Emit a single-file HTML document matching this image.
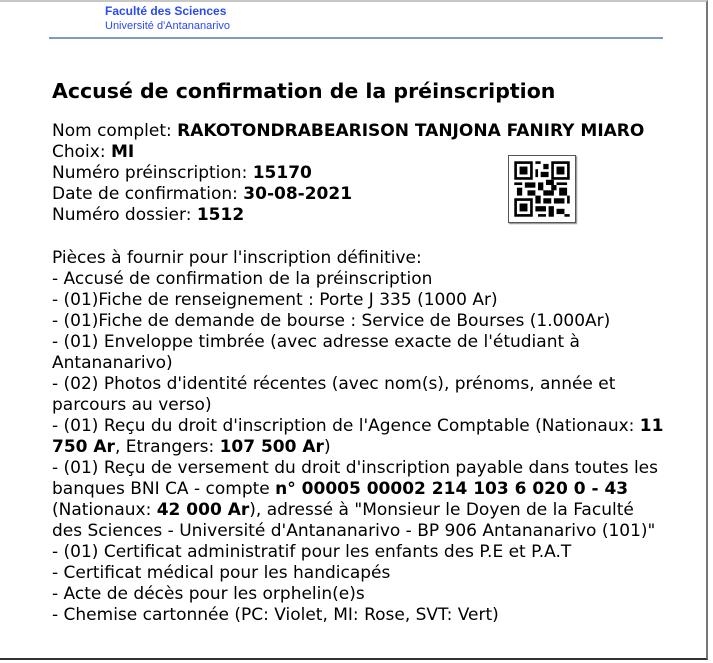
<!DOCTYPE html>
<html><head><meta charset="utf-8"><style>
body{margin:0;width:713px;height:663px;background:#fff;position:relative;overflow:hidden}
.frame{position:absolute;left:0;top:0;width:708px;height:660px;border-top:2px solid #c8c8c8;border-right:2px solid #777;border-bottom:2px solid #333;box-sizing:border-box}
.h1{position:absolute;left:105px;top:4px;font:bold 12px "Liberation Sans",sans-serif;color:#2a4bf0}
.h2{position:absolute;left:105px;top:20px;font:11px "Liberation Sans",sans-serif;color:#2a4bf0}
.rule{position:absolute;left:49px;top:37px;height:2px;background:#7d9ac0;width:614px}
.title{position:absolute;left:52px;top:79px;font:bold 20.5px "DejaVu Sans",sans-serif;color:#000;white-space:nowrap}
.txt{position:absolute;left:52px;font:17px/21px "DejaVu Sans",sans-serif;color:#000;white-space:nowrap}
.qr{position:absolute;left:508px;top:155px;width:66px;height:66px;border:1px solid #555;box-shadow:1px 1px 1px #888;background:#fff}
</style></head><body>
<div class="frame"></div>
<div class="h1">Faculté des Sciences</div>
<div class="h2">Université d'Antananarivo</div>
<div class="rule"></div>
<div class="title">Accusé de confirmation de la préinscription</div>
<div class="txt" style="top:121px">Nom complet: <b>RAKOTONDRABEARISON TANJONA FANIRY MIARO</b><br>Choix: <b>MI</b><br>Numéro préinscription: <b>15170</b><br>Date de confirmation: <b>30-08-2021</b><br>Numéro dossier: <b>1512</b></div>
<div class="qr"><svg width="66" height="66" viewBox="0 0 25 25"><g fill="#000">
<rect x="2" y="2" width="7" height="7"/><rect x="3" y="3" width="5" height="5" fill="#fff"/><rect x="4" y="4" width="3" height="3"/>
<rect x="16" y="2" width="7" height="7"/><rect x="17" y="3" width="5" height="5" fill="#fff"/><rect x="18" y="4" width="3" height="3"/>
<rect x="2" y="16" width="7" height="7"/><rect x="3" y="17" width="5" height="5" fill="#fff"/><rect x="4" y="18" width="3" height="3"/>
<rect x="10" y="2" width="2" height="1"/><rect x="13" y="3" width="2" height="2"/><rect x="10" y="5" width="1" height="3"/><rect x="12" y="6" width="3" height="2"/>
<rect x="2" y="10" width="3" height="1"/><rect x="6" y="10" width="4" height="2"/><rect x="11" y="10" width="2" height="3"/><rect x="14" y="9" width="3" height="2"/><rect x="18" y="10" width="4" height="1"/>
<rect x="3" y="12" width="2" height="3"/><rect x="7" y="13" width="3" height="2"/><rect x="13" y="13" width="4" height="2"/><rect x="19" y="12" width="3" height="3"/><rect x="16" y="11" width="2" height="2"/>
<rect x="10" y="15" width="2" height="3"/><rect x="13" y="16" width="3" height="2"/><rect x="17" y="16" width="4" height="2"/><rect x="22" y="15" width="1" height="3"/>
<rect x="10" y="19" width="4" height="2"/><rect x="15" y="19" width="2" height="4"/><rect x="18" y="20" width="3" height="2"/><rect x="11" y="22" width="3" height="1"/><rect x="21" y="22" width="2" height="1"/></g></svg></div>
<div class="txt" style="top:248px">Pièces à fournir pour l'inscription définitive:<br>- Accusé de confirmation de la préinscription<br>- (01)Fiche de renseignement : Porte J 335 (1000 Ar)<br>- (01)Fiche de demande de bourse : Service de Bourses (1.000Ar)<br>- (01) Enveloppe timbrée (avec adresse exacte de l'étudiant à<br>Antananarivo)<br>- (02) Photos d'identité récentes (avec nom(s), prénoms, année et<br>parcours au verso)<br>- (01) Reçu du droit d'inscription de l'Agence Comptable (Nationaux: <b>11</b><br><b>750 Ar</b>, Etrangers: <b>107 500 Ar</b>)<br>- (01) Reçu de versement du droit d'inscription payable dans toutes les<br>banques BNI CA - compte <b>n° 00005 00002 214 103 6 020 0 - 43</b><br>(Nationaux: <b>42 000 Ar</b>), adressé à "Monsieur le Doyen de la Faculté<br>des Sciences - Université d'Antananarivo - BP 906 Antananarivo (101)"<br>- (01) Certificat administratif pour les enfants des P.E et P.A.T<br>- Certificat médical pour les handicapés<br>- Acte de décès pour les orphelin(e)s<br>- Chemise cartonnée (PC: Violet, MI: Rose, SVT: Vert)</div>
</body></html>
